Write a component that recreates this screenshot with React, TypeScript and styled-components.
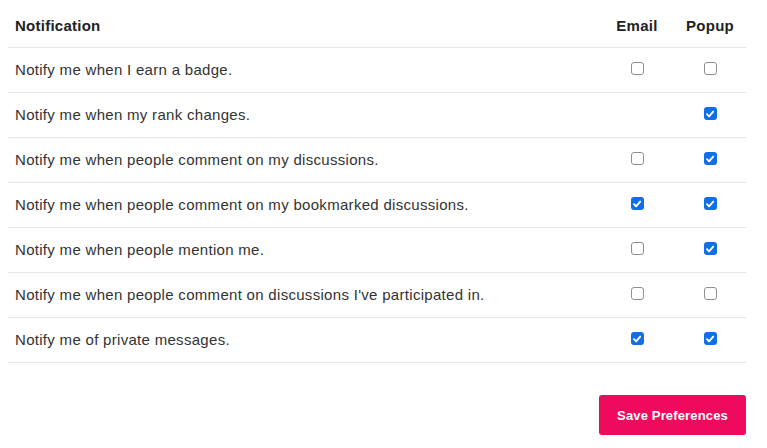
import React, { useState } from "react";
import styled, { createGlobalStyle } from "styled-components";

const Global = createGlobalStyle`
  html, body { margin: 0; padding: 0; background: #fff; }
  body { font-family: "Liberation Sans", Arial, Helvetica, sans-serif; }
`;

const Page = styled.div`
  padding: 0 21px 0 8px;
`;

const Table = styled.div`
  display: flex;
  flex-direction: column;
`;

const Row = styled.div<{ $head?: boolean }>`
  display: grid;
  grid-template-columns: 1fr 74px 72px;
  align-items: center;
  height: ${(p) => (p.$head ? 47 : 44)}px;
  border-bottom: 1px solid #e6e6e6;
`;

const Label = styled.div`
  padding-left: 7px;
  font-size: 15px;
  letter-spacing: 0.3px;
  color: #333;
  margin-top: -2px;
`;

const HeadLabel = styled.div<{ $center?: boolean }>`
  padding-left: ${(p) => (p.$center ? 0 : 7)}px;
  font-size: 15px;
  font-weight: bold;
  letter-spacing: 0.25px;
  color: #222;
  text-align: ${(p) => (p.$center ? "center" : "left")};
  margin-top: 3px;
`;

const Cell = styled.div`
  display: flex;
  justify-content: center;
  align-items: center;
  margin-top: -3px;
`;

const Box = styled.button<{ $on: boolean }>`
  width: 13px;
  height: 13px;
  padding: 0;
  border-radius: 3px;
  box-sizing: border-box;
  border: ${(p) => (p.$on ? "none" : "1px solid #8f8f8f")};
  background: ${(p) => (p.$on ? "#0f6fe8" : "#fff")};
  display: flex;
  align-items: center;
  justify-content: center;
  cursor: pointer;
`;

const Footer = styled.div`
  display: flex;
  justify-content: flex-end;
  padding-top: 32px;
`;

const SaveButton = styled.button`
  width: 147px;
  height: 40px;
  border: none;
  border-radius: 3px;
  background: #ef0a5e;
  color: #fff;
  font-family: "Liberation Sans", Arial, sans-serif;
  font-weight: bold;
  font-size: 13px;
  letter-spacing: 0.15px;
  cursor: pointer;
`;

type Pref = { label: string; email: boolean | null; popup: boolean };

const initial: Pref[] = [
  { label: "Notify me when I earn a badge.", email: false, popup: false },
  { label: "Notify me when my rank changes.", email: null, popup: true },
  { label: "Notify me when people comment on my discussions.", email: false, popup: true },
  { label: "Notify me when people comment on my bookmarked discussions.", email: true, popup: true },
  { label: "Notify me when people mention me.", email: false, popup: true },
  { label: "Notify me when people comment on discussions I've participated in.", email: false, popup: false },
  { label: "Notify me of private messages.", email: true, popup: true },
];

const Check: React.FC<{ on: boolean; onToggle: () => void }> = ({ on, onToggle }) => (
  <Box $on={on} onClick={onToggle} aria-pressed={on}>
    {on && (
      <svg width="10" height="10" viewBox="0 0 10 10">
        <path d="M2 5.2 L4.1 7.3 L8.2 2.6" fill="none" stroke="#fff" strokeWidth="1.9" strokeLinecap="round" strokeLinejoin="round" />
      </svg>
    )}
  </Box>
);

export default function App() {
  const [prefs, setPrefs] = useState(initial);
  const toggle = (i: number, key: "email" | "popup") =>
    setPrefs((ps) => ps.map((p, j) => (j === i ? { ...p, [key]: !p[key] } : p)));
  return (
    <Page>
      <Global />
      <Table>
        <Row $head>
          <HeadLabel>Notification</HeadLabel>
          <HeadLabel $center>Email</HeadLabel>
          <HeadLabel $center>Popup</HeadLabel>
        </Row>
        {prefs.map((p, i) => (
          <Row key={i}>
            <Label>{p.label}</Label>
            <Cell>{p.email !== null && <Check on={p.email} onToggle={() => toggle(i, "email")} />}</Cell>
            <Cell>
              <Check on={p.popup} onToggle={() => toggle(i, "popup")} />
            </Cell>
          </Row>
        ))}
      </Table>
      <Footer>
        <SaveButton>Save Preferences</SaveButton>
      </Footer>
    </Page>
  );
}
